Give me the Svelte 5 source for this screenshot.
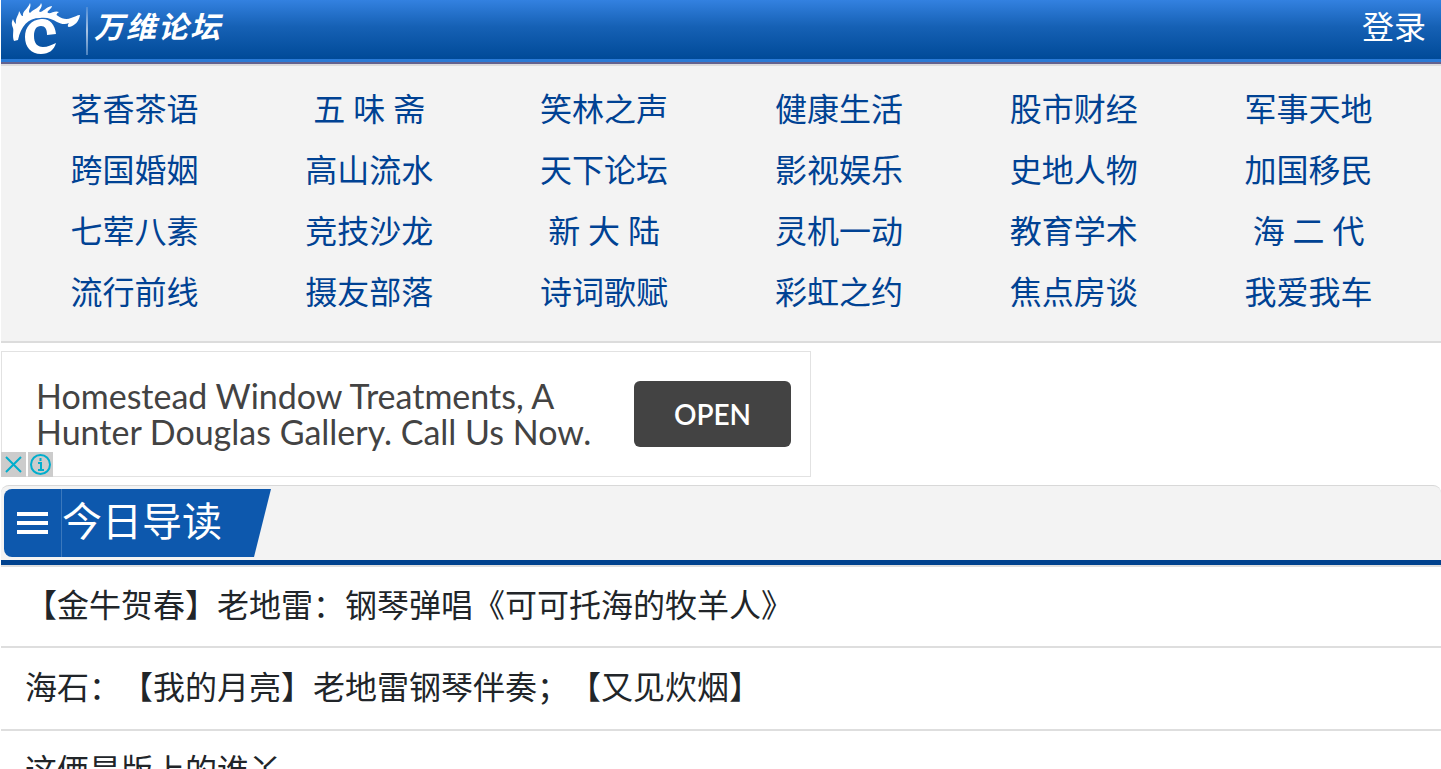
<script>
    let rows = [
        ['茗香茶语', '五 味 斋', '笑林之声', '健康生活', '股市财经', '军事天地'],
        ['跨国婚姻', '高山流水', '天下论坛', '影视娱乐', '史地人物', '加国移民'],
        ['七荤八素', '竞技沙龙', '新 大 陆', '灵机一动', '教育学术', '海 二 代'],
        ['流行前线', '摄友部落', '诗词歌赋', '彩虹之约', '焦点房谈', '我爱我车']
    ]
    let posts = [
        '【金牛贺春】老地雷：钢琴弹唱《可可托海的牧羊人》',
        '海石：【我的月亮】老地雷钢琴伴奏；【又见炊烟】',
        '这俩是版上的谁丫'
    ]
    let adShow = true
</script>

<div class="page">
    <header class="top">
        <a class="brand" href="/">
            <svg class="logo" viewBox="0 0 72 56" aria-hidden="true">
                <path fill="#fff" d="M4 41C2 36 4 31 3 28C2 25 1 23 3 19C4 22 5 23 6 24C5 18 9 15 9 11C11 14 11 16 13 16C12 11 18 9 20 3C22 7 17 11 20 13C23 9 30 8 31 3C34 7 27 11 30 12C33 12 36 7 42 6C42 9 36 11 38 13C41 14 45 10 49 12C46 14 46 15 48 16C52 19 57 20 61 18C65 17 67 15 70 15C69 21 65 26 59 27C57 27 58 24 59 23C55 25 51 24 47 22C42 19 37 17 30 18C18 18 11 26 8 40Z"/>
                <path fill="#fff" d="M31 19C39 18 45 24 46 34L37 35C37 29 35 26 31 26C26 26 24 30 24 36C24 43 27 47 33 47C38 47 41 45 46 43C44 50 39 54 31 54C21 54 15 47 15 37C15 27 21 20 31 19Z"/>
            </svg>
            <span class="line"></span>
            <b class="name">万维论坛</b>
        </a>
        <a class="login" href="/login">登录</a>
    </header>

    <nav class="forums">
        {#each rows as row}
            {#each row as item}
                <a href="/forum">{item}</a>
            {/each}
        {/each}
    </nav>

    {#if adShow}
    <div class="ad">
        <p>Homestead Window Treatments, A<br>Hunter Douglas Gallery. Call Us Now.</p>
        <button class="open">OPEN</button>
        <div class="adIcons">
            <button aria-label="关闭" on:click={() => adShow = false}>
                <svg viewBox="0 0 25 25"><path d="M5 5L20 20M20 5L5 20"/></svg>
            </button>
            <button aria-label="广告信息">
                <svg viewBox="0 0 25 25"><circle cx="12.5" cy="12.5" r="9.5"/><path d="M10 11H13V18M10 18H16M12.5 6V9"/></svg>
            </button>
        </div>
    </div>
    {/if}

    <section class="guide">
        <div class="bar">
            <button class="menu" aria-label="菜单">
                <svg viewBox="0 0 32 22"><path d="M0 2H31M0 11H31M0 20H31"/></svg>
            </button>
            <h2>今日导读</h2>
        </div>
        <ul>
            {#each posts as post}
                <li><a href="/post">{post}</a></li>
            {/each}
        </ul>
    </section>
</div>

<style>
    :global(body){
        margin: 0;
        background: #fff;
    }
    :global(html){
        overflow: hidden;
    }
    .page{
        height: 100vh;
        overflow: hidden;
        padding-left: 1px;
        box-sizing: border-box;
        font-family: Roboto, "Noto Sans CJK SC", sans-serif;
        font-size: 32px;
        color: #212529;
        text-spacing-trim: space-all;
    }
    a{
        color: inherit;
        text-decoration: none;
    }
    button{
        border: 0;
        padding: 0;
    }
    .top{
        display: flex;
        justify-content: space-between;
        height: 59px;
        background: linear-gradient(#3381e0, #1661b5 45%, #004a98);
        border-bottom: 3px solid #2a7ad6;
        box-shadow: 0 2px 0 #62628f;
        color: #fff;
    }
    .brand{
        display: flex;
        align-items: flex-start;
    }
    .logo{
        width: 72px;
        height: 56px;
        margin-left: 9px;
    }
    .line{
        width: 2px;
        height: 48px;
        margin: 7px 6px 0 4px;
        background: linear-gradient(#4c8bd6, #a9c4e4, #4c83c0);
    }
    .name{
        font-size: 30px;
        line-height: 56px;
        font-style: italic;
        letter-spacing: 2px;
    }
    .login{
        line-height: 56px;
        padding-right: 15px;
    }
    .forums{
        display: grid;
        grid-template-columns: repeat(6, 1fr);
        margin-top: 2px;
        padding: 14px 15px 17px 16px;
        border-top: 2px solid #dcdcdc;
        border-bottom: 2px solid #dcdcdc;
        background: #f3f3f3;
        color: #004293;
        text-align: center;
    }
    .forums a{
        line-height: 61px;
    }
    .ad{
        position: relative;
        display: flex;
        align-items: center;
        justify-content: space-between;
        box-sizing: border-box;
        width: 810px;
        max-width: 100%;
        height: 126px;
        margin: 8px 0;
        padding: 0 19px 0 34px;
        border: 1px solid #e2e2e2;
        color: #434343;
        font-family: Lato, sans-serif;
    }
    .ad p{
        margin: 0;
        font-size: 34px;
        line-height: 36px;
        white-space: nowrap;
    }
    .open{
        width: 157px;
        height: 66px;
        border-radius: 6px;
        background: #434343;
        color: #fff;
        font: 600 28px Lato, sans-serif;
    }
    .adIcons{
        position: absolute;
        left: -1px;
        bottom: -1px;
        display: flex;
        gap: 2px;
    }
    .adIcons button{
        width: 25px;
        height: 25px;
        background: #ccc;
    }
    .adIcons svg{
        display: block;
        fill: none;
        stroke: #00aecd;
        stroke-width: 2;
    }
    .bar{
        display: flex;
        height: 68px;
        padding: 3px;
        border-top: 1px solid #d8d8d8;
        border-bottom: 5px solid #00428e;
        border-radius: 8px 8px 0 0;
        background: #f3f3f3;
        color: #fff;
    }
    .menu{
        width: 57px;
        border-radius: 8px 0 0 8px;
        background: #0d58ad;
    }
    .menu svg{
        display: block;
        width: 32px;
        height: 22px;
        margin-left: 13px;
        stroke: #fff;
        stroke-width: 4;
    }
    h2{
        box-sizing: border-box;
        width: 210px;
        margin: 0;
        border-left: 1px solid #3a78bd;
        background: #0d58ad;
        clip-path: polygon(0 0, 100% 0, 193px 100%, 0 100%);
        font-size: 40px;
        font-weight: 400;
        line-height: 68px;
    }
    ul{
        margin: 0;
        padding: 0;
        list-style: none;
        border-top: 2px solid #dedede;
    }
    li{
        padding: 0 24px;
        border-bottom: 2px solid #dedede;
        line-height: 81px;
    }
    li:first-child{
        line-height: 79px;
    }
</style>
